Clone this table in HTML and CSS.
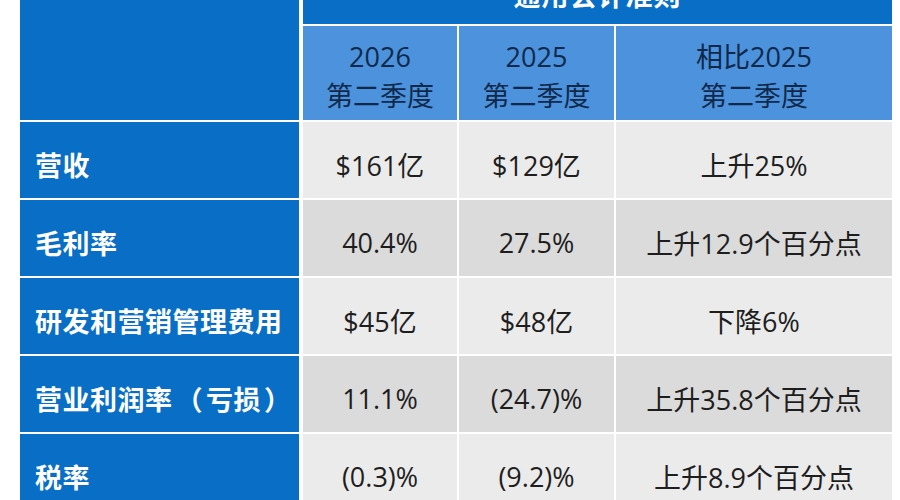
FILE: index.html
```html
<!DOCTYPE html>
<html lang="zh-CN">
<head>
<meta charset="utf-8">
<title>通用会计准则</title>
<link rel="stylesheet" href="styles.css">
</head>
<body>
<div class="sheet">
  <div class="corner"></div>
  <div class="title">通用会计准则</div>
  <div class="sub">2026<br>第二季度</div>
  <div class="sub">2025<br>第二季度</div>
  <div class="sub">相比2025<br>第二季度</div>

  <div class="label">营收</div>
  <div class="cell light">$161亿</div>
  <div class="cell light">$129亿</div>
  <div class="cell light">上升25%</div>

  <div class="label">毛利率</div>
  <div class="cell dark">40.4%</div>
  <div class="cell dark">27.5%</div>
  <div class="cell dark">上升12.9个百分点</div>

  <div class="label">研发和营销管理费用</div>
  <div class="cell light">$45亿</div>
  <div class="cell light">$48亿</div>
  <div class="cell light">下降6%</div>

  <div class="label">营业利润率<span class="paren">（</span>亏损<span class="paren">）</span></div>
  <div class="cell dark">11.1%</div>
  <div class="cell dark">(24.7)%</div>
  <div class="cell dark">上升35.8个百分点</div>

  <div class="label">税率</div>
  <div class="cell light">(0.3)%</div>
  <div class="cell light">(9.2)%</div>
  <div class="cell light">上升8.9个百分点</div>
</div>
</body>
</html>
```

FILE: styles.css
```css
html, body {
  margin: 0;
  padding: 0;
  background: #ffffff;
  overflow: hidden;
}

body {
  font-family: "Open Sans", "Noto Sans CJK SC", sans-serif;
  font-size: 27px;
}

.sheet {
  display: grid;
  grid-template-columns: 279px 156px 155px 276px;
  grid-template-rows: 49px 94px repeat(5, 76px);
  column-gap: 2px;
  row-gap: 2px;
  margin: -25px 0 0 20px;
}

.corner {
  grid-row: 1 / 3;
  grid-column: 1;
  background: #086ec6;
  margin-right: -2px;
  width: 279px;
}

.title {
  grid-column: 2 / 5;
  margin-left: 2px;
  background: #086ec6;
  color: #ffffff;
  font-weight: 700;
  letter-spacing: 1px;
  display: flex;
  align-items: flex-end;
  justify-content: center;
  line-height: 30px;
  padding-bottom: 13px;
  box-sizing: border-box;
}

.sub {
  background: #4c92dc;
  color: #10294a;
  text-align: center;
  line-height: 39px;
  display: flex;
  align-items: center;
  justify-content: center;
  padding-top: 6px;
  box-sizing: border-box;
}

.sub:nth-of-type(3) {
  margin-left: 2px;
}

.label {
  background: #086ec6;
  color: #ffffff;
  font-weight: 700;
  display: flex;
  align-items: center;
  padding: 8px 0 0 15px;
  box-sizing: border-box;
  letter-spacing: 0.5px;
}

.paren {
  margin: 0 3px;
}

.cell {
  color: #1e1e1e;
  display: flex;
  align-items: center;
  justify-content: center;
  padding-top: 9px;
  box-sizing: border-box;
}

.label + .cell {
  margin-left: 2px;
}

.light {
  background: #ebebeb;
}

.dark {
  background: #dbdbdb;
}
```
